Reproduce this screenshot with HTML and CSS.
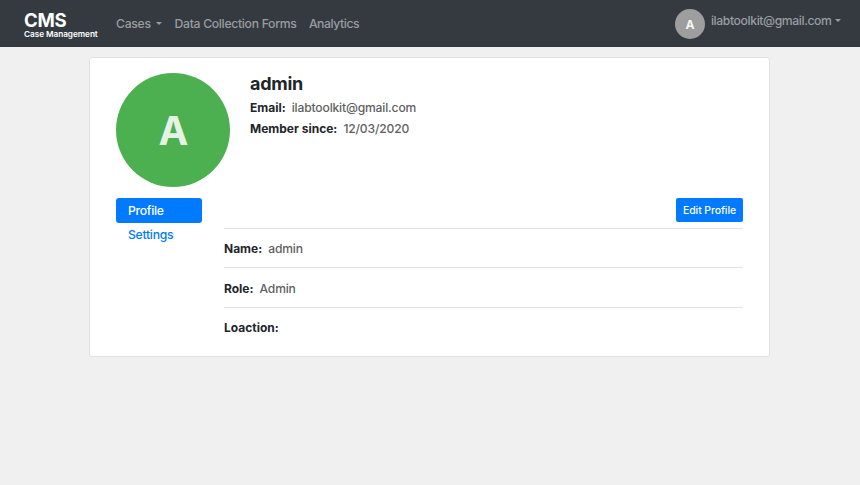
FILE: index.html
```html
<!DOCTYPE html>
<html lang="en">
<head>
<meta charset="utf-8">
<title>CMS Case Management</title>
<link rel="stylesheet" href="styles.css">
</head>
<body>
<header class="navbar">
  <a class="brand"><span class="brand-name">CMS</span><span class="brand-sub">Case Management</span></a>
  <nav class="nav">
    <a class="cases">Cases<i class="caret"></i></a>
    <a>Data Collection Forms</a>
    <a>Analytics</a>
  </nav>
  <div class="account">
    <span class="avatar-small">A</span>
    <a class="account-link">ilabtoolkit@gmail.com<i class="caret"></i></a>
  </div>
</header>
<main class="card">
  <section class="summary">
    <div class="avatar">A</div>
    <div class="summary-text">
      <h1>admin</h1>
      <p><b>Email:</b><span>ilabtoolkit@gmail.com</span></p>
      <p><b>Member since:</b><span>12/03/2020</span></p>
    </div>
  </section>
  <section class="details">
    <nav class="tabs">
      <a class="active">Profile</a>
      <a>Settings</a>
    </nav>
    <div class="pane">
      <div class="actions"><button class="edit">Edit Profile</button></div>
      <div class="row"><b>Name:</b><span>admin</span></div>
      <div class="row"><b>Role:</b><span>Admin</span></div>
      <div class="row"><b>Loaction:</b></div>
    </div>
  </section>
</main>
</body>
</html>
```
FILE: styles.css
```css
* { box-sizing: border-box; }
body {
  margin: 0;
  background: #f0f0f0;
  color: #212529;
  font: 12px/18px Inter, "Liberation Sans", sans-serif;
}
.navbar {
  display: flex;
  align-items: center;
  height: 47px;
  padding: 0 19px 0 24px;
  background: #343a40;
  color: #9a9da0;
  font-size: 12.2px;
  font-weight: 500;
  letter-spacing: -0.3px;
}
.brand { display: flex; flex-direction: column; width: 92px; padding-top: 2px; color: #fff; }
.brand-name { font-size: 18.6px; line-height: 19px; font-weight: 700; letter-spacing: -0.3px; }
.brand-sub { font-size: 8.2px; line-height: 9px; font-weight: 600; letter-spacing: -0.03px; }
.nav { display: flex; gap: 12.4px; }
.nav a:last-child { letter-spacing: -0.42px; }
.cases .caret { margin-left: 5.5px; }
.caret {
  display: inline-block;
  margin-left: 3.5px;
  vertical-align: 3px;
  border: 3px solid transparent;
  border-top-color: currentColor;
  border-bottom: 0;
}
.account { display: flex; align-items: center; gap: 6px; margin-left: auto; }
.account-link { padding-bottom: 6px; letter-spacing: -0.39px; }
.avatar-small {
  width: 30px;
  height: 30px;
  border-radius: 50%;
  background: #9e9e9e;
  color: #f5f5f5;
  font-weight: 700;
  line-height: 31px;
  text-align: center;
}
.card {
  width: 681px;
  height: 300px;
  margin: 10px 0 0 89px;
  padding: 15px 26px 0 26px;
  border: 1px solid #e1e1e1;
  border-radius: 3px;
  background: #fff;
}
.summary { display: flex; height: 125px; }
.avatar {
  width: 114px;
  height: 114px;
  margin-left: 0.4px;
  border-radius: 50%;
  background: #4caf50;
  color: #e4f3e5;
  font-size: 40px;
  line-height: 116px;
  font-weight: 700;
  text-align: center;
}
.summary-text { margin-left: 19.6px; }
h1 { margin: 0 0 5px; font-size: 18px; line-height: 21px; font-weight: 700; letter-spacing: -0.25px; }
p { margin: 0 0 3px; }
b { margin-right: 6px; font-weight: 700; }
p span, .row span { color: #5f5f5f; font-size: 12.1px; font-weight: 500; letter-spacing: -0.16px; }
.details { display: flex; gap: 22px; }
.tabs { width: 86px; font-size: 12.2px; font-weight: 500; letter-spacing: -0.28px; }
.tabs a { display: block; height: 24.5px; padding-left: 12px; line-height: 24px; border-radius: 3px; color: #007bff; }
.tabs .active { background: #007bff; color: #fff; line-height: 25px; }
.pane { flex: 1; }
.actions { display: flex; justify-content: flex-end; height: 30px; }
.edit {
  width: 67px;
  height: 24px;
  padding: 1px 0 0;
  border: 0;
  border-radius: 2px;
  background: #007bff;
  color: #fff;
  font: 500 10.5px/24px Inter, "Liberation Sans", sans-serif;
  letter-spacing: -0.1px;
}
.row { height: 39.4px; padding-top: 11px; border-top: 1px solid #e4e4e4; }
.row:nth-child(3) { padding-top: 11.5px; }
```
